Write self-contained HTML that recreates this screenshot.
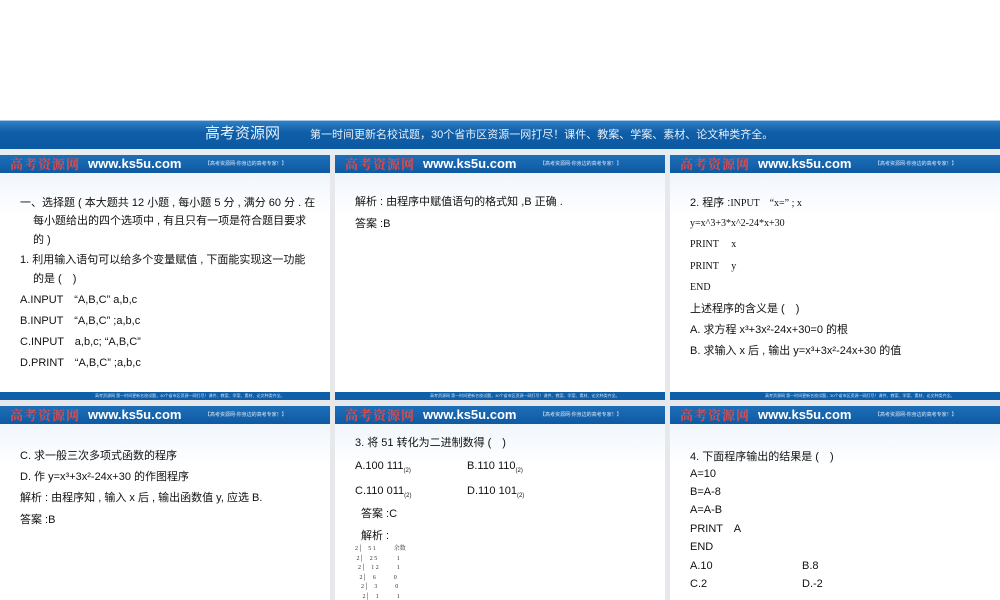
<!DOCTYPE html>
<html><head><meta charset="utf-8"><style>
*{margin:0;padding:0;box-sizing:border-box}
body{width:1000px;height:600px;background:#fff;position:relative;overflow:hidden;font-family:"Liberation Sans","Noto Sans CJK SC",sans-serif;color:#111}
.abs{position:absolute}
.banner{left:0;top:120px;width:1000px;height:29px;background:linear-gradient(#2f80c4,#0f5ea8 40%,#0b59a2);border-top:1px solid #a9c7e4}
.banner span{position:absolute;top:5px;color:#e8f0fa;font-size:13px;white-space:nowrap;line-height:18px}
.gray{background:#e6e8ec}
.panel{position:absolute;width:330px;background:linear-gradient(#eaf2fb,#fff 60px);overflow:hidden}
.hdr{position:absolute;left:0;top:0;width:100%;height:18px;background:linear-gradient(#1d6fb8,#0e5aa3);overflow:hidden}
.hdr .logo{position:absolute;left:10px;top:0;line-height:18px;color:#e04a4a;font-size:13px;font-family:"Noto Serif CJK SC",serif;font-weight:bold;letter-spacing:1px}
.hdr .url{position:absolute;left:88px;top:0;line-height:18px;color:#fff;font-size:13px;font-weight:bold}
.hdr .sm{position:absolute;left:205px;top:0;line-height:18px;color:#dbe8f7;font-size:5px;white-space:nowrap}
.strip{position:absolute;left:0;width:100%;height:8px;background:#0f5ea8;overflow:hidden}
.strip span{position:absolute;left:95px;top:0;line-height:8px;font-size:4px;color:#cfe0f3;white-space:nowrap}
.t{position:absolute;font-size:11px;white-space:nowrap;line-height:14px}
.m{font-family:"Liberation Serif","Noto Serif CJK SC",serif;font-size:10px}
sub{font-size:6px;line-height:0}
</style></head><body>
<div class="abs banner"><span style="left:205px;font-size:15px;top:4px">高考资源网</span><span style="left:310px;font-size:11px;top:5px">第一时间更新名校试题，30个省市区资源一网打尽！课件、教案、学案、素材、论文种类齐全。</span></div>
<div class="abs" style="left:0;top:149px;width:1000px;height:6px;background:#e8edf2"></div>
<div class="abs gray" style="left:330px;top:155px;width:5px;height:445px"></div>
<div class="abs gray" style="left:665px;top:155px;width:5px;height:445px"></div>
<div class="abs gray" style="left:0;top:400px;width:1000px;height:6px"></div>

<!-- row1 -->
<div class="panel" style="left:0;top:155px;height:245px">
<div class="hdr"><span class="logo">高考资源网</span><span class="url">www.ks5u.com</span><span class="sm">【高考资源网-你身边的高考专家！】</span></div>
<div class="strip" style="top:237px"><span>高考资源网 第一时间更新名校试题，30个省市区资源一网打尽！课件、教案、学案、素材、论文种类齐全。</span></div>
<div class="t" style="left:20px;top:41px">一、选择题 ( 本大题共 12 小题 , 每小题 5 分 , 满分 60 分 . 在</div>
<div class="t" style="left:33px;top:59px">每小题给出的四个选项中 , 有且只有一项是符合题目要求</div>
<div class="t" style="left:33px;top:78px">的 )</div>
<div class="t" style="left:20px;top:98px">1. 利用输入语句可以给多个变量赋值 , 下面能实现这一功能</div>
<div class="t" style="left:33px;top:117px">的是 (　)</div>
<div class="t" style="left:20px;top:138px">A.INPUT　“A,B,C” a,b,c</div>
<div class="t" style="left:20px;top:159px">B.INPUT　“A,B,C” ;a,b,c</div>
<div class="t" style="left:20px;top:180px">C.INPUT　a,b,c; “A,B,C”</div>
<div class="t" style="left:20px;top:201px">D.PRINT　“A,B,C” ;a,b,c</div>
</div>
<div class="panel" style="left:335px;top:155px;height:245px">
<div class="hdr"><span class="logo">高考资源网</span><span class="url">www.ks5u.com</span><span class="sm">【高考资源网-你身边的高考专家！】</span></div>
<div class="strip" style="top:237px"><span>高考资源网 第一时间更新名校试题，30个省市区资源一网打尽！课件、教案、学案、素材、论文种类齐全。</span></div>
<div class="t" style="left:20px;top:40px">解析 : 由程序中赋值语句的格式知 ,B 正确 .</div>
<div class="t" style="left:20px;top:62px">答案 :B</div>
</div>
<div class="panel" style="left:670px;top:155px;height:245px">
<div class="hdr"><span class="logo">高考资源网</span><span class="url">www.ks5u.com</span><span class="sm">【高考资源网-你身边的高考专家！】</span></div>
<div class="strip" style="top:237px"><span>高考资源网 第一时间更新名校试题，30个省市区资源一网打尽！课件、教案、学案、素材、论文种类齐全。</span></div>
<div class="t" style="left:20px;top:41px">2. 程序 :<span class="m">INPUT　“x=” ; x</span></div>
<div class="t m" style="left:20px;top:62px">y=x^3+3*x^2-24*x+30</div>
<div class="t m" style="left:20px;top:83px">PRINT　 x</div>
<div class="t m" style="left:20px;top:105px">PRINT　 y</div>
<div class="t m" style="left:20px;top:126px">END</div>
<div class="t" style="left:20px;top:147px">上述程序的含义是 (　)</div>
<div class="t" style="left:20px;top:168px">A. 求方程 x³+3x²-24x+30=0 的根</div>
<div class="t" style="left:20px;top:189px">B. 求输入 x 后 , 输出 y=x³+3x²-24x+30 的值</div>
</div>

<!-- row2 -->
<div class="panel" style="left:0;top:406px;height:194px">
<div class="hdr"><span class="logo">高考资源网</span><span class="url">www.ks5u.com</span><span class="sm">【高考资源网-你身边的高考专家！】</span></div>
<div class="t" style="left:20px;top:43px">C. 求一般三次多项式函数的程序</div>
<div class="t" style="left:20px;top:64px">D. 作 y=x³+3x²-24x+30 的作图程序</div>
<div class="t" style="left:20px;top:85px">解析 : 由程序知 , 输入 x 后 , 输出函数值 y, 应选 B.</div>
<div class="t" style="left:20px;top:107px">答案 :B</div>
</div>
<div class="panel" style="left:335px;top:406px;height:194px">
<div class="hdr"><span class="logo">高考资源网</span><span class="url">www.ks5u.com</span><span class="sm">【高考资源网-你身边的高考专家！】</span></div>
<div class="t" style="left:20px;top:30px">3. 将 51 转化为二进制数得 (　)</div>
<div class="t" style="left:20px;top:53px">A.100 111<sub>(2)</sub></div>
<div class="t" style="left:132px;top:53px">B.110 110<sub>(2)</sub></div>
<div class="t" style="left:20px;top:78px">C.110 011<sub>(2)</sub></div>
<div class="t" style="left:132px;top:78px">D.110 101<sub>(2)</sub></div>
<div class="t" style="left:26px;top:101px">答案 :C</div>
<div class="t" style="left:26px;top:123px">解析 :</div>
<div class="t m" style="left:20px;top:139px;font-size:6px;line-height:9.5px;color:#333">
2│　5 1　　　余数<br>&nbsp;2│　2 5　　　 1<br>&nbsp;&nbsp;2│　1 2　　　1<br>&nbsp;&nbsp;&nbsp;2│　6　　　0<br>&nbsp;&nbsp;&nbsp;&nbsp;2│　3　　　0<br>&nbsp;&nbsp;&nbsp;&nbsp;&nbsp;2│　1　　　1</div>
</div>
<div class="panel" style="left:670px;top:406px;height:194px">
<div class="hdr"><span class="logo">高考资源网</span><span class="url">www.ks5u.com</span><span class="sm">【高考资源网-你身边的高考专家！】</span></div>
<div class="t" style="left:20px;top:44px">4. 下面程序输出的结果是 (　)</div>
<div class="t" style="left:20px;top:61px">A=10</div>
<div class="t" style="left:20px;top:79px">B=A-8</div>
<div class="t" style="left:20px;top:97px">A=A-B</div>
<div class="t" style="left:20px;top:116px">PRINT　A</div>
<div class="t" style="left:20px;top:134px">END</div>
<div class="t" style="left:20px;top:153px">A.10</div>
<div class="t" style="left:132px;top:153px">B.8</div>
<div class="t" style="left:20px;top:171px">C.2</div>
<div class="t" style="left:132px;top:171px">D.-2</div>
</div>
</body></html>
